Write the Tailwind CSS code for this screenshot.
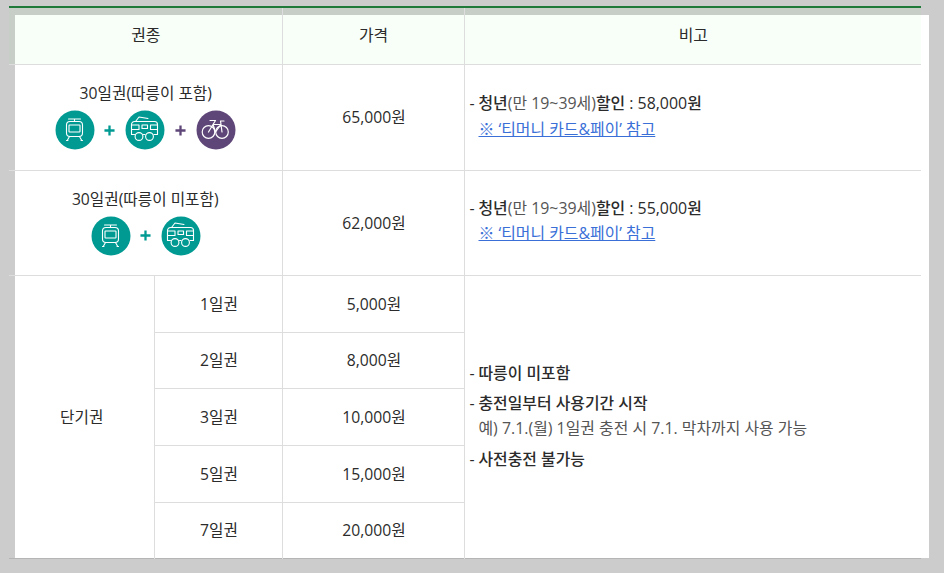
<!DOCTYPE html>
<html lang="ko">
<head>
  <meta charset="UTF-8" />
  <title>요금표</title>
  <script src="https://cdn.jsdelivr.net/npm/@tailwindcss/browser@4"></script>
</head>
<body class="bg-[#cccccc] h-[573px] overflow-hidden font-['Open_Sans','Noto_Sans_CJK_KR',sans-serif] text-[15.9px] text-[#2b2b2b]">
  <svg class="hidden">
    <symbol id="tram" viewBox="0 0 40 40">
      <g fill="none" stroke="#fff" stroke-width="1.1" stroke-linecap="round" stroke-linejoin="round">
        <path d="M13.500 9h12M19.500 9v2.500"/>
        <rect x="11.500" y="11.500" width="16" height="15" rx="3.500"/>
        <rect x="14" y="15" width="11" height="7" rx=".5"/>
        <path d="M14.500 26.500l-2 3.500M24.500 26.500l2 3.500M11.500 30.500h1.500M26 30.500h1.500"/>
      </g>
    </symbol>
    <symbol id="bus" viewBox="0 0 40 40">
      <g fill="none" stroke="#fff" stroke-width="1.1" stroke-linecap="round" stroke-linejoin="round">
        <path d="M10.500 11.500l3.500-4.500 9 1.500"/>
        <path d="M6.500 24.500V14.500a3 3 0 0 1 3-3h20a3 3 0 0 1 3 3v10h-3.500M6.500 24.500h3M18.500 24.500h1.500"/>
        <path d="M6.500 15h7.500v4.500h-7.500M25.500 15h7M25.500 15v4.500h7M17 15h5.500v3.500h-5.500z"/>
        <circle cx="14" cy="26.500" r="3.900"/>
        <circle cx="24.500" cy="26.500" r="3.900"/>
      </g>
    </symbol>
    <symbol id="bike" viewBox="0 0 40 40">
      <g fill="none" stroke="#fff" stroke-width="1.2" stroke-linecap="round" stroke-linejoin="round">
        <circle cx="12.500" cy="22" r="6.300"/>
        <circle cx="26" cy="22" r="6.300"/>
        <path d="M12.500 22l4.500-7.500h8l1 7.500M17 14.500l2.500 7.500 5.500-7.500M14 10.500h5.500L17 14.500M25 14.500l-.5-3.500h3.500"/>
      </g>
    </symbol>
    <symbol id="plus" viewBox="0 0 12 12">
      <path d="M6 .5v11M.5 6h11" fill="none" stroke="currentColor" stroke-width="2.500"/>
    </symbol>
  </svg>

  <div class="flow-root ml-[15px] mt-[15px] w-[914px] h-[543px] bg-white">
    <table class="-ml-[6px] -mt-[9px] relative w-[912px] table-fixed border-collapse border-t-2 border-t-[#1f7a3a] border-b border-b-[#b5b5b5]">
      <colgroup>
        <col class="w-[145px]" />
        <col class="w-[128px]" />
        <col class="w-[182px]" />
        <col class="w-[457px]" />
      </colgroup>
      <thead>
        <tr class="h-[57px] bg-[#00ff28]/[0.03] border-b border-[#dddddd]">
          <th colspan="2" class="font-normal text-center pl-[1px]">권종</th>
          <th class="font-normal text-center pl-[1px] border-l border-[#dddddd]">가격</th>
          <th class="font-normal text-center pl-[1px] border-l border-[#dddddd]">비고</th>
        </tr>
      </thead>
      <tbody class="text-[15.7px]">
        <tr class="h-[106px] border-b border-[#dddddd]">
          <td colspan="2" class="text-center align-middle pb-[2px]">
            <p class="leading-[22px] mb-[6px] pl-[1px]">30일권(따릉이 포함)</p>
            <div class="flex items-center justify-center">
              <svg class="size-[40px]"><circle cx="20" cy="20" r="19.500" fill="#009a93"/><use href="#tram"/></svg>
              <svg class="size-[11px] mx-[9.5px] text-[#009a93]"><use href="#plus"/></svg>
              <svg class="size-[40px]"><circle cx="20" cy="20" r="19.500" fill="#009a93"/><use href="#bus"/></svg>
              <svg class="size-[11px] mx-[10px] text-[#5f4678]"><use href="#plus"/></svg>
              <svg class="size-[40px]"><circle cx="20" cy="20" r="19.500" fill="#5f4678"/><use href="#bike"/></svg>
            </div>
          </td>
          <td class="text-center border-l border-[#dddddd] pl-[2px] pt-[2px]">65,000원</td>
          <td class="border-l border-[#dddddd] pl-[5px] pb-[3px] text-[15.9px]">
            <p class="leading-[26px] font-medium"><span class="inline-block w-[9px] font-normal">-</span>청년<span class="font-normal text-[#555555]">(만 19~39세)</span>할인 : 58,000원</p>
            <a href="#" class="block ml-[9px] leading-[26px] text-[#3a6fd8] underline">※ ‘티머니 카드&amp;페이’ 참고</a>
          </td>
        </tr>
        <tr class="h-[105px] border-b border-[#dddddd]">
          <td colspan="2" class="text-center align-middle pb-[2px]">
            <p class="leading-[22px] mb-[6px]">30일권(따릉이 미포함)</p>
            <div class="flex items-center justify-center pl-[1px]">
              <svg class="size-[40px]"><circle cx="20" cy="20" r="19.500" fill="#009a93"/><use href="#tram"/></svg>
              <svg class="size-[11px] mx-[9.5px] text-[#009a93]"><use href="#plus"/></svg>
              <svg class="size-[40px]"><circle cx="20" cy="20" r="19.500" fill="#009a93"/><use href="#bus"/></svg>
            </div>
          </td>
          <td class="text-center border-l border-[#dddddd] pl-[2px] pt-[2px]">62,000원</td>
          <td class="border-l border-[#dddddd] pl-[5px] pb-[3px] text-[15.9px]">
            <p class="leading-[25px] font-medium"><span class="inline-block w-[9px] font-normal">-</span>청년<span class="font-normal text-[#555555]">(만 19~39세)</span>할인 : 55,000원</p>
            <a href="#" class="block ml-[9px] leading-[25px] text-[#3a6fd8] underline">※ ‘티머니 카드&amp;페이’ 참고</a>
          </td>
        </tr>
        <tr class="h-[57px] border-b border-[#dddddd]">
          <td rowspan="5" class="text-center pl-[1px] pt-[2px]">단기권</td>
          <td class="text-center border-l border-[#dddddd] pl-[2px] pt-[2px]">1일권</td>
          <td class="text-center border-l border-[#dddddd] pl-[2px] pt-[2px]">5,000원</td>
          <td rowspan="5" class="border-l border-[#dddddd] pl-[5px] pb-[2px] text-[15.9px]">
            <p class="leading-[26px] font-medium"><span class="inline-block w-[9px] font-normal">-</span>따릉이 미포함</p>
            <p class="leading-[26px] mt-[4px] font-medium"><span class="inline-block w-[9px] font-normal">-</span>충전일부터 사용기간 시작</p>
            <p class="leading-[24px] ml-[9px] text-[#555555]">예) 7.1.(월) 1일권 충전 시 7.1. 막차까지 사용 가능</p>
            <p class="leading-[26px] mt-[6px] font-medium"><span class="inline-block w-[9px] font-normal">-</span>사전충전 불가능</p>
          </td>
        </tr>
        <tr class="h-[56px] border-b border-[#dddddd]">
          <td class="text-center border-l border-[#dddddd] pl-[2px] pt-[2px]">2일권</td>
          <td class="text-center border-l border-[#dddddd] pl-[2px] pt-[2px]">8,000원</td>
        </tr>
        <tr class="h-[57px] border-b border-[#dddddd]">
          <td class="text-center border-l border-[#dddddd] pl-[2px] pt-[2px]">3일권</td>
          <td class="text-center border-l border-[#dddddd] pl-[2px] pt-[2px]">10,000원</td>
        </tr>
        <tr class="h-[57px] border-b border-[#dddddd]">
          <td class="text-center border-l border-[#dddddd] pl-[2px] pt-[2px]">5일권</td>
          <td class="text-center border-l border-[#dddddd] pl-[2px] pt-[2px]">15,000원</td>
        </tr>
        <tr class="h-[56px]">
          <td class="text-center border-l border-[#dddddd] pl-[2px] pt-[2px]">7일권</td>
          <td class="text-center border-l border-[#dddddd] pl-[2px] pt-[2px]">20,000원</td>
        </tr>
      </tbody>
    </table>
  </div>
</body>
</html>
